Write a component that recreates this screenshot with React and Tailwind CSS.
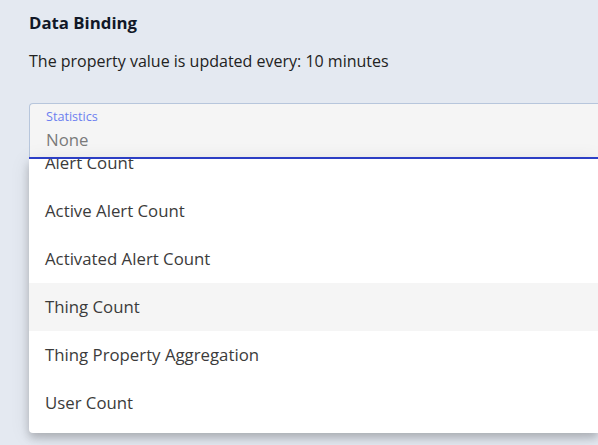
import React, { useState } from "react";

const options = [
  "Alert Count",
  "Active Alert Count",
  "Activated Alert Count",
  "Thing Count",
  "Thing Property Aggregation",
  "User Count",
];

const App = () => {
  const [hovered] = useState("Thing Count");

  return (
    <div
      className="w-[598px] h-[445px] overflow-hidden bg-[#e4e9f1] text-[#1d1d1d]"
      style={{ fontFamily: '"Open Sans", "Noto Sans", sans-serif' }}
    >
      <div className="pl-[29px] pt-[12px]">
        {/* Section header */}
        <h2 className="text-[16.8px] font-bold leading-[22px] text-[#111827]">Data Binding</h2>
        <p className="mt-[16px] text-[16px] leading-[22px] text-[#222]">
          The property value is updated every: 10 minutes
        </p>

        {/* Select field */}
        <div className="mt-[31px]">
          <div className="h-[54px] rounded-tl-[4px] border-t border-l border-[#b7c6dc] bg-[#f5f5f5] pl-[16px] pt-[4px]">
            <div className="text-[12.6px] leading-[18px] text-[#6c7ff0]">Statistics</div>
            <div className="text-[16.8px] leading-[28px] text-[#7a7a7a]">None</div>
          </div>
          <div className="h-[2px] bg-[#2f43d0]" />

          {/* Open menu */}
          <div className="h-[274px] overflow-hidden rounded-bl-[4px] bg-white shadow-[0_5px_8px_rgba(0,0,0,0.2),0_2px_20px_rgba(0,0,0,0.1)]">
            <ul className="-mt-[20px]">
              {options.map((o) => (
                <li
                  key={o}
                  className={`h-[48px] flex items-center pl-[16px] text-[16.8px] text-[#3b3b3b] ${
                    o === hovered ? "bg-[#f5f5f5]" : ""
                  }`}
                >
                  {o}
                </li>
              ))}
            </ul>
          </div>
        </div>
      </div>
    </div>
  );
};

export default App;
